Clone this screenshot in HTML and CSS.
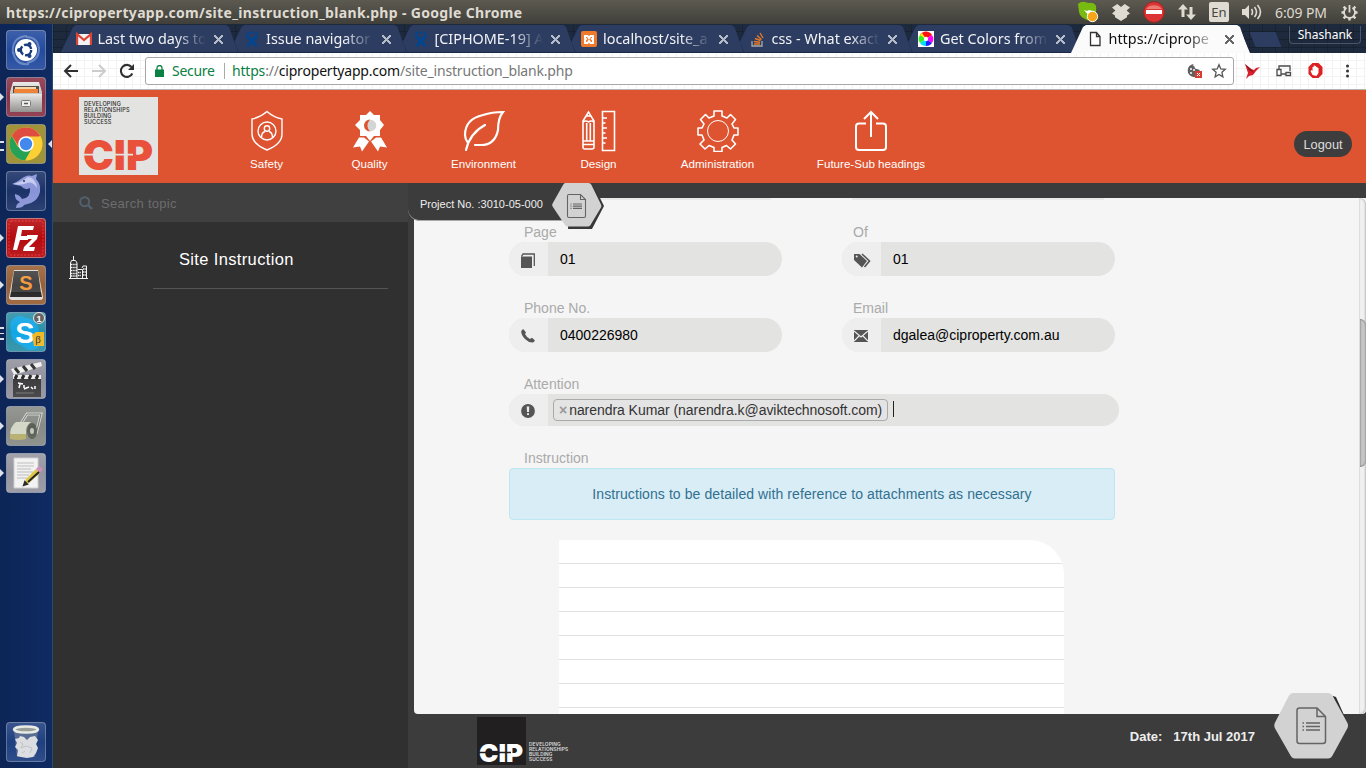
FILE: index.html
```html
<!DOCTYPE html>
<html lang="en">
<head>
<meta charset="utf-8">
<title>Site Instruction</title>
<link rel="stylesheet" href="styles.css">
</head>
<body>
<svg class="defs" width="0" height="0" aria-hidden="true">
  <defs>
    <linearGradient id="steel" x1="0" y1="0" x2="0" y2="1"><stop offset="0" stop-color="#e8e8e6"/><stop offset="1" stop-color="#8d8c8b"/></linearGradient>
    <symbol id="jira" viewBox="0 0 14 16"><g fill="#04458c"><circle cx="7" cy="1.600" r="1.600"/><circle cx="2.600" cy="2.600" r="1.500"/><circle cx="11.400" cy="2.600" r="1.500"/><path d="M0 5l3-.5 4 2.300 4-2.300 3 .5-4.500 4.700L13 15l-3 1-3-4-3 4-3-1 3.500-5.300z"/></g></symbol>
    <symbol id="hex" viewBox="0 0 52 46"><path d="M18 3h24l10 20-12 23H16z" fill="#383838"/><path d="M13.500 0h23Q38.500 0 39.500 2L49 21.500q.8 1.500 0 3L38.500 42q-1 1.500-3 1.500H16q-2 0-3-1.500L.6 23.500q-.8-1.500 0-3L11 2q.8-2 2.500-2z" fill="#d2d2d2"/><path d="M17 11.500h11.500l5 5V33q0 1.500-1.500 1.500H17q-1.500 0-1.500-1.500V13q0-1.500 1.500-1.500zm11.500 0v5h5" fill="none" stroke="#646464" stroke-width="1.100"/><path d="M21 21h9M21 23.200h9M21 25.400h9M18.500 21h1M18.500 23.200h1M18.500 25.400h1" stroke="#646464" stroke-width="1.200"/></symbol>
    <symbol id="hex-large" viewBox="0 0 75 66"><path d="M59 3l3 1 12 27-15 30z" fill="#2c2c2c"/><path d="M19 0h35q3 0 4.500 2.500L73.500 30q1 2.500 0 5L58.500 62.500Q57 65.500 54 65.500H21q-3 0-4.500-3L.8 35q-1-2.500 0-5L15 2.500Q16.500 0 19 0z" fill="#d2d2d2"/><path d="M25.500 15H43l8.500 8.500V48q0 2.500-2.500 2.500H25.500Q23 50.500 23 48V17.500q0-2.500 2.500-2.500zM43 15v8.500h8.500" fill="none" stroke="#646464" stroke-width="1.500"/><path d="M32 30h14M32 33.500h14M32 37h14M28.500 30h1.500M28.500 33.500h1.500M28.500 37h1.500" stroke="#646464" stroke-width="1.500"/></symbol>
  </defs>
</svg>

<div class="titlebar">
  <span class="window-title">https://cipropertyapp.com/site_instruction_blank.php - Google Chrome</span>
  <div class="tray">
    <svg width="22" height="22" viewBox="0 0 22 22"><path d="M1 3q4-4 10-1 6-1 8 3 1 8-3 12-4 4-8 1-5-2-6-7z" fill="#77bb10"/><path d="M7 9l3 1 2-1 4 1-3 6z" fill="#fff"/><circle cx="15.500" cy="15.500" r="5.200" fill="#f9a51a" stroke="#fff"/></svg>
    <svg width="18" height="17" viewBox="0 0 18 17"><path d="M5.300 0L9 3l3.700-3L18 3.600 14.600 6.500 18 9.400l-3 2v1.800L9 17l-6-3.800v-1.800l-3-2 3.400-2.900L0 3.600z" fill="#dfdbd2"/></svg>
    <svg width="22" height="22" viewBox="0 0 22 22"><circle cx="11" cy="11" r="10.300" fill="#dc3434" stroke="#a32424"/><path d="M3 8a9 7 0 0116 0z" fill="#ec7b72"/><path d="M3 9h16v4H3z" fill="#fff"/></svg>
    <svg width="18" height="18" viewBox="0 0 18 18"><path d="M5 1l5 5.500H6.500V14h-3V6.500H0zM13 17l-5-5.500h3.500V4h3v7.500H18z" fill="#dfdbd2"/></svg>
    <span class="keyboard">En</span>
    <svg width="20" height="16" viewBox="0 0 20 16"><path d="M0 5h3l4-4v14l-4-4H0z" fill="#dfdbd2"/><path d="M9.500 5q2 3 0 6M12.500 3q4 5 0 10M15.500 1q6 7 0 14" fill="none" stroke="#dfdbd2" stroke-width="1.600"/></svg>
    <span class="clock">6:09 PM</span>
    <svg width="17" height="17" viewBox="0 0 17 17"><g fill="none" stroke="#dfdbd2" stroke-width="1.800"><path d="M5.500 3.800a5.500 5.500 0 106 0M8.500 1v7.500"/><path stroke-width="2.400" d="M.5 8.500h2.500M14 8.500h2.500M2.600 2.600l1.700 1.700M12.700 4.300l1.700-1.700M2.600 14.400l1.700-1.700M12.700 12.700l1.700 1.700M8.500 14v2.500"/></g></svg>
  </div>
</div>

<div class="desktop">
  <nav class="launcher">
    <div class="app"><svg viewBox="0 0 40 40"><rect class="tile" x=".5" y=".5" width="39" height="39" rx="3" fill="#244b9f"/><path d="M7 24Q5 7 21 6M20 7q13 0 13 14M33 17q1 13-12 16M23 34Q10 36 7 22" fill="none" stroke="#7d9bd0" stroke-width="2" opacity=".7"/><circle cx="20" cy="20" r="11" fill="#fff"/><circle cx="20" cy="20" r="5.200" fill="none" stroke="#16387e" stroke-width="2.400" stroke-dasharray="9 1.900"/><g fill="#16387e"><circle cx="13" cy="20" r="2"/><circle cx="23.500" cy="14" r="2"/><circle cx="23.500" cy="26" r="2"/></g></svg></div>
    <div class="app running"><svg viewBox="0 0 40 40"><rect class="tile" x=".5" y=".5" width="39" height="39" rx="3" fill="#8b3347"/><path d="M7 5h26l3 10v20H4V15z" fill="url(#steel)"/><path d="M7 9h26v7H7z" fill="#4c4540"/><path d="M8 12h24v4H8z" fill="#ee7e2f"/><path d="M9 10h21v2H9z" fill="#f3d4a5"/><path d="M4 17h32v18H4z" fill="url(#steel)"/><rect x="15.500" y="23.500" width="9" height="6" rx="1" fill="#eee" stroke="#777"/><path d="M18 26.500h4" stroke="#555" stroke-width="1.500"/></svg></div>
    <div class="app windows focused"><svg viewBox="0 0 40 40"><rect class="tile" x=".5" y=".5" width="39" height="39" rx="3" fill="#a1933a"/><circle cx="20" cy="20" r="16.500" fill="#fccf35"/><path d="M20 20L5.700 11.750A16.500 16.500 0 0134.300 12z" fill="#df4d40"/><path d="M5.700 11.750A16.500 16.500 0 0019 36.500L26 24 12 23z" fill="#26a257"/><path d="M20 12.500h14.500L27 24z" fill="#fccf35"/><path d="M6 12l7 11 7-10z" fill="#df4d40"/><circle cx="20" cy="20" r="7.800" fill="#fff"/><circle cx="20" cy="20" r="6.200" fill="#4288ed"/></svg></div>
    <div class="app"><svg viewBox="0 0 40 40"><rect class="tile" x=".5" y=".5" width="39" height="39" rx="3" fill="#1b3268"/><path d="M6 13q5-2 9-5 6-5 11-3l5-2-1 5q5 5 4 13-2 8-9 11l-7 2q-1 3-8 3 0-4 4-6-6-3-5-8 5 1 7 5 9-1 8-11-5 3-9-2-5-1-9-2z" fill="#8994d8"/><path d="M7 13q9-2 15-7 8 1 9 11-5-7-10-5-6 3-14 1z" fill="#c3c9ef"/><circle cx="18" cy="10" r="1" fill="#17224d"/></svg></div>
    <div class="app running"><svg viewBox="0 0 40 40"><rect x=".5" y=".5" width="39" height="39" rx="3" fill="#b40b0f" stroke="#b96b70"/><rect x="3" y="3" width="34" height="34" rx="2" fill="none" stroke="#ee3030" stroke-dasharray="2 1.500"/><path d="M12 8h16l-1 4H16l-1 6h8l-1 4h-8l-3 10H7z" fill="#fff"/><path d="M21 17h11l-1 4-8 8h6l-1 4H17l1-4 8-8h-5z" fill="#fff"/></svg></div>
    <div class="app running"><svg viewBox="0 0 40 40"><rect class="tile" x=".5" y=".5" width="39" height="39" rx="3" fill="#996035"/><path d="M8 5h24l5 27q0 3-3 3H6q-3 0-3-3z" fill="#dedddb"/><path d="M8 6h24l3 22H5z" fill="#434344"/><path d="M5 27h30l1 5H4z" fill="#242425"/><text x="20" y="25" text-anchor="middle" class="mark-s">S</text></svg></div>
    <div class="app windows many"><svg viewBox="0 0 40 40"><rect class="tile" x=".5" y=".5" width="39" height="39" rx="3" fill="#2a90a8"/><circle cx="14" cy="14" r="10" fill="#12a6e6"/><circle cx="25" cy="27" r="11" fill="#12a6e6"/><circle cx="19" cy="20" r="14" fill="#12a6e6"/><text x="19" y="31" text-anchor="middle" class="mark-skype">S</text><path d="M26 23l4-3h8v14H28z" fill="#efb823"/><text x="32" y="31" text-anchor="middle" class="mark-beta">β</text><circle cx="33" cy="6" r="5.500" fill="#555" stroke="#e8e8e8"/><text x="33" y="9.500" text-anchor="middle" class="mark-count">1</text></svg></div>
    <div class="app running"><svg viewBox="0 0 40 40"><rect class="tile" x=".5" y=".5" width="39" height="39" rx="3" fill="#92929e"/><path d="M7 18h28v20H7z" fill="#3d3d3f"/><path d="M5 10L35 3l1 4L8 16z" fill="#eee"/><path d="M7 16h28v4H7z" fill="#eee"/><path d="M9 9l4 5M17 7l4 5M25 5l4 5M11 16l-2 4M18 16l-2 4M25 16l-2 4M32 16l-2 4" stroke="#282828" stroke-width="3"/><path d="M12 24l5 1m-3 0l-1 4m5-3v3m0 1l5-2m2 0l2 2m2-3v3" stroke="#fff" stroke-width="1.500"/><path d="M10 34h18" stroke="#777"/></svg></div>
    <div class="app running"><svg viewBox="0 0 40 40"><rect class="tile" x=".5" y=".5" width="39" height="39" rx="3" fill="#878a85"/><path d="M14 19l7-11h14l-5 20" fill="none" stroke="#d0d1ce" stroke-width="3"/><path d="M14 19l7-11h14l-5 20" fill="none" stroke="#717670"/><path d="M9 17h18v15H5z" fill="#898e7c"/><path d="M10 16h15q-6 4-5 12l-16 2q0-10 6-14z" fill="#d3d7c7"/><ellipse cx="26" cy="25" rx="5" ry="8" fill="#5b6057"/><ellipse cx="26" cy="25" rx="2" ry="3" fill="#c3c6bd"/><path d="M4 28h16v5q-8 2-16 0z" fill="#b6ae6d"/></svg></div>
    <div class="app running"><svg viewBox="0 0 40 40"><rect class="tile" x=".5" y=".5" width="39" height="39" rx="3" fill="#9696a0"/><path d="M8 5h24v30H8z" fill="#f2f2f2" stroke="#ccc"/><path d="M11 10h17M11 13h17M11 16h14M11 19h16M11 22h12M11 25h10" stroke="#bbb"/><path d="M18 32l2-6 10-10 4 4-11 10z" fill="#ddc746"/><path d="M30 16l3-3 4 3-3 4z" fill="#cf8dba"/><path d="M18 32l1-3 2 2zM22 29l11-10" fill="#222" stroke="#222" stroke-width="2"/></svg></div>
    <div class="app trash"><svg viewBox="0 0 40 40"><rect class="tile" x=".5" y=".5" width="39" height="39" rx="3" fill="#1f3f80"/><path d="M8 9h24l-3 26H11z" fill="#52678f"/><path d="M9 17l4-1 1-2 4 1 3 3 3-3 5-1 3 4-2 4 2 4-2 5-3 4-6 1-6-1-4-1 1-6-3-3 2-4z" fill="#dcdde0"/><path d="M14 20l3 2-2 4 5-2 6 2-2 5M16 31l3-2" fill="none" stroke="#bfc1c7"/><ellipse cx="20" cy="7.500" rx="12" ry="3" fill="#909791" stroke="#e9e9e3" stroke-width="2.500"/></svg></div>
  </nav>

  <div class="browser">
    <div class="tabs">
      <div class="tab t1"><svg class="fav" viewBox="0 0 16 16"><path d="M1 3h14v11H1z" fill="#f3f3f3"/><path d="M1 14V3l7 6 7-6v11" fill="none" stroke="#dc4437" stroke-width="2.300"/></svg><span class="tab-title">Last two days to</span><i class="close"></i></div>
      <div class="tab t2"><svg class="fav"><use href="#jira"/></svg><span class="tab-title">Issue navigator</span><i class="close"></i></div>
      <div class="tab t3"><svg class="fav"><use href="#jira"/></svg><span class="tab-title">[CIPHOME-19] A</span><i class="close"></i></div>
      <div class="tab t4"><svg class="fav" viewBox="0 0 16 16"><rect width="16" height="16" rx="2" fill="#f0792b"/><path d="M4 5h2.500L8 7l1.500-2H12v2.500l-1 .5 1 1V12H9.500L8 10l-1.500 2H4V9l1-1-1-1z" fill="none" stroke="#fff" stroke-width="2"/></svg><span class="tab-title">localhost/site_a</span><i class="close"></i></div>
      <div class="tab t5"><svg class="fav" viewBox="0 0 16 16"><path d="M2 10v5h10v-5" fill="none" stroke="#aaa" stroke-width="1.300"/><path d="M4 13h6M4 10.500l6 .7M5 7.500l5.600 2M7 4.500l4.500 4M10 2l3 5" stroke="#e67b27" stroke-width="1.400"/></svg><span class="tab-title">css - What exact</span><i class="close"></i></div>
      <div class="tab t6"><svg class="fav" viewBox="0 0 16 16"><path d="M0 0h16v16H0z" fill="#fff"/><path d="M8 8L2 4a7 7 0 0112 0z" fill="#f11"/><path d="M8 8l6-4a7 7 0 010 8z" fill="#f0f"/><path d="M8 8l6 4a7 7 0 01-6 3z" fill="#22f"/><path d="M8 8v7a7 7 0 01-6-3z" fill="#0df"/><path d="M8 8l-6 4a7 7 0 010-8z" fill="#3e2"/><path d="M8 8L2 4l2-2z" fill="#ff0"/><circle cx="8" cy="8" r="2.200" fill="#fff"/></svg><span class="tab-title">Get Colors from</span><i class="close"></i></div>
      <div class="tab t7 active"><svg class="fav" viewBox="0 0 16 16"><path d="M3.500 1.500h6l3.500 4v9H3.500zM9.500 1.500v4H13" fill="#fff" stroke="#333" stroke-width="1.300"/></svg><span class="tab-title">https://ciprope</span><i class="close"></i></div>
      <i class="new-tab"></i>
      <span class="profile">Shashank</span>
    </div>

    <div class="toolbar">
      <svg class="navs" width="76" height="18" viewBox="0 0 76 18"><path d="M16 9H3M9 3L3 9l6 6" fill="none" stroke="#303030" stroke-width="2"/><path d="M30 9h13M37 3l6 6-6 6" fill="none" stroke="#ccc" stroke-width="2"/><path d="M69.500 5a6 6 0 10.800 6.500" fill="none" stroke="#303030" stroke-width="2.100"/><path d="M72 2v6h-6z" fill="#303030"/></svg>
      <div class="omnibox">
        <svg width="9" height="12" viewBox="0 0 9 12"><path d="M0 4.500h9V12H0z" fill="#0b8043"/><path d="M2 5V3a2.500 2.500 0 015 0v2" fill="none" stroke="#0b8043" stroke-width="1.300"/></svg>
        <span class="secure">Secure</span>
        <span class="url"><b>https</b>://<em>cipropertyapp.com</em>/site_instruction_blank.php</span>
        <svg class="end" width="40" height="16" viewBox="0 0 40 16"><path d="M6.500 1q-1 2 1 2.500 0 2.500 2 2.500 3 0 4 3a6.500 6.500 0 11-7-8z" fill="#606060"/><g fill="#fff"><circle cx="4" cy="6" r="1"/><circle cx="7" cy="7" r="1"/><circle cx="4" cy="10" r="1"/></g><path d="M8 8h7v7H8z" fill="#d93d32"/><path d="M10 10l3 3m0-3l-3 3" stroke="#fff"/><path d="M32 1.700l1.800 4.200 4.500.4-3.400 3 1 4.500-3.900-2.400-3.900 2.400 1-4.500-3.400-3 4.500-.4z" fill="none" stroke="#555" stroke-width="1.300"/></svg>
      </div>
      <svg class="extensions" width="112" height="18" viewBox="0 0 112 18"><path d="M0 2l6 5 3 1 2-2 4-1-4 4-3 4-4 1-3 3 2-6z" fill="#d91f2b"/><path d="M0 2l6 5 3 4-5-3z" fill="#8d1620"/><g fill="none" stroke="#4c4c4c" stroke-width="1.300"><path d="M34 7V4h11v5M36 12h5"/><path d="M32 7.500h4v6h-4zM41 10.500h4.500v3H41z"/></g><path d="M67.500 1h6l4 4v7l-4 4h-6l-4-4V5z" fill="#df2020"/><path d="M67.500 13l-2-4 1-1 1 1V5h1.200V3.500h1.200V4h1.200v1h1.400v1h1v5l-2 3z" fill="#fff"/><g fill="#333"><circle cx="102.500" cy="4" r="1.500"/><circle cx="102.500" cy="9" r="1.500"/><circle cx="102.500" cy="14" r="1.500"/></g></svg>
    </div>

    <header class="site-header">
      <div class="logo">
        <div class="tagline">DEVELOPING<br>RELATIONSHIPS<br>BUILDING<br>SUCCESS</div>
        <svg width="72" height="32" viewBox="0 0 72 32"><text x="0" y="30.500" textLength="70" lengthAdjust="spacingAndGlyphs" class="cip">CIP</text><path d="M-1 15.700h51" stroke="#e3e3e1" stroke-width="1.800"/></svg>
      </div>
      <nav class="site-nav">
        <a><svg width="34" height="42" viewBox="0 0 34 42"><g fill="none" stroke="#fff" stroke-width="1.400"><path d="M17 1.500Q23 7 32 9v15q0 10-15 16Q2 34 2 24V9q9-2 15-7.500z"/><circle cx="17" cy="21" r="9"/><circle cx="17" cy="18.500" r="2.700"/><path d="M11.500 27.500q0-5 3.500-6M22.500 27.500q0-5-3.500-6"/></g></svg>Safety</a>
        <a><svg width="36" height="42" viewBox="0 0 36 42"><path d="M18 1l4 4h6v5l4 5-4 5v6h-6l-4 5-4-5H8v-6l-5-5 5-5V5h6z" fill="#fff"/><path d="M7 27.500h5l5 4-7 10-2-5-7 1zM29 27.500h-5l-5 4 7 10 2-5 7 1z" fill="#fff"/><circle cx="18.500" cy="15.500" r="5.800" fill="#d4d4d4"/><path d="M18 9.500a6 6 0 000 12q-5-6 0-12z" fill="#de5330"/></svg>Quality</a>
        <a><svg width="42" height="42" viewBox="0 0 42 42"><g fill="none" stroke="#fff" stroke-width="2.200" stroke-linecap="round"><path d="M12 35h6q14 0 17-15 0-12 5-18-11 0-20 3Q2 9 2 25q0 4 3 8"/><path d="M22 15Q7 23 3 40"/></g></svg>Environment</a>
        <a><svg width="36" height="42" viewBox="0 0 36 42"><g fill="none" stroke="#fff" stroke-width="1.600"><path d="M2 11L7.500 2 13 11v26q0 2-2 2H4q-2 0-2-2zM2 31h11M2 34.500h11M5.700 13v18M9.300 13v18M2 12q3-2 5.500 0 2.500-2 5.500 0M5 6h5"/><path d="M21.500 1.500h12v39h-12zM21 8h5M21 13h3.500M21 18h5M21 23h3.500M21 28h5M21 33h3.500"/></g></svg>Design</a>
        <a><svg width="42" height="42" viewBox="0 0 42 42"><g fill="none" stroke="#fff" stroke-width="1.600" stroke-linejoin="round"><path d="M17 1h8v5l5 2 3.500-3.500 5 5L35 14l2 4h4v7h-4l-2 5 3.500 4-5 5-4-3.500-4.500 2v4h-8v-4l-5-2-4 3.500-5-5L7 30l-2-5H1v-7h4l2-4-3.500-4.500 5-5L12 8l5-2z"/><circle cx="21" cy="21" r="10.500" stroke-width="1"/></g></svg>Administration</a>
        <a><svg width="34" height="42" viewBox="0 0 34 42"><g fill="none" stroke="#fff" stroke-width="2"><path d="M12 13.500H5q-3 0-3 3V37q0 3 3 3h24q3 0 3-3V16.500q0-3-3-3h-7M17 27V2M10 9l7-7 7 7"/></g></svg>Future-Sub headings</a>
      </nav>
      <button class="logout">Logout</button>
    </header>

    <div class="workspace">
      <aside class="sidebar">
        <div class="search"><svg width="14" height="14" viewBox="0 0 14 14"><circle cx="5.700" cy="5.700" r="4.500" fill="none" stroke="#52616f" stroke-width="2"/><path d="M9 9l4 4" stroke="#52616f" stroke-width="2.400"/></svg>Search topic</div>
        <div class="topic">
          <svg width="19" height="24" viewBox="0 0 19 24"><g fill="none" stroke="#f4f4f4"><path d="M4.500 0v4M1.500 22.500V7l1-2.500h4L8 7v15.500M8.500 13.500h5v9M13 12l1-2h3.500v12.500M0 22.500h19"/><path d="M2 8.500h6M2 11.500h6M2 14.500h6M2 17.500h6M2 20h6M9 16.500h3M9 19.500h3M14 13h3M14 16h3M14 19h3" stroke-width="1.400" stroke-dasharray="1.500 .7"/></g></svg>
          <span class="topic-title">Site Instruction</span>
        </div>
      </aside>

      <main class="content">
        <div class="project"><span>Project No. :3010-05-000</span></div>
        <svg class="project-hex"><use href="#hex"/></svg>
        <section class="panel">
          <form class="form">
            <div class="row previous"><i></i><i></i></div>
            <div class="row">
              <div class="field"><label>Page</label><div class="input"><span class="addon"><svg width="14" height="15" viewBox="0 0 14 15"><path d="M0 3.500h11V15H0z" fill="#555"/><path d="M.5 3.500L2 1h11.300v12" fill="none" stroke="#555" stroke-width="1.300"/></svg></span><span class="value">01</span></div></div>
              <div class="field"><label>Of</label><div class="input"><span class="addon"><svg width="18" height="15" viewBox="0 0 18 15"><path d="M0 1h5.500l7.500 7-5 6.500L0 7z" fill="#555"/><circle cx="2.700" cy="3.500" r="1" fill="#eee"/><path d="M8 1l7.500 7-5 6" fill="none" stroke="#555" stroke-width="1.600"/></svg></span><span class="value">01</span></div></div>
            </div>
            <div class="row">
              <div class="field"><label>Phone No.</label><div class="input"><span class="addon"><svg width="14" height="14" viewBox="0 0 14 14"><path d="M2.500.3q-1.500 0-2.300 2Q0 6 4 10t8 3.500q1.800-.8 1.800-2.300L11 8.800 9 10Q6 9 4 5l1-1.500z" fill="#555"/></svg></span><span class="value">0400226980</span></div></div>
              <div class="field"><label>Email</label><div class="input"><span class="addon"><svg width="14" height="12" viewBox="0 0 14 12"><path d="M0 0h14v12H0z" fill="#555"/><path d="M0 1l7 6 7-6M0 11l5-5M14 11L9 6" fill="none" stroke="#eee" stroke-width="1.200"/></svg></span><span class="value">dgalea@ciproperty.com.au</span></div></div>
            </div>
            <div class="field wide"><label>Attention</label><div class="input"><span class="addon"><svg width="14" height="14" viewBox="0 0 14 14"><circle cx="7" cy="7" r="6.900" fill="#555"/><path d="M5.700 2.500h2.600L8 8H6zM6 9.200h2V11H6z" fill="#eee"/></svg></span><span class="tags"><span class="tag"><i>×</i>narendra Kumar (narendra.k@aviktechnosoft.com)</span><i class="caret"></i></span></div></div>
            <div class="field instruction"><label>Instruction</label><div class="alert">Instructions to be detailed with reference to attachments as necessary</div></div>
            <div class="notes"></div>
          </form>
          <div class="scrollbar"><i></i></div>
        </section>
        <footer class="footer">
          <div class="footer-logo"><svg width="45" height="22" viewBox="0 0 45 22"><text x="0" y="20" textLength="44" lengthAdjust="spacingAndGlyphs" class="cip-small">CIP</text><path d="M-1 10.500h33" stroke="#211f20" stroke-width="1.300"/></svg></div>
          <div class="footer-tag">DEVELOPING<br>RELATIONSHIPS<br>BUILDING<br>SUCCESS</div>
          <div class="date"><span>Date:</span><span>17th Jul 2017</span></div>
        </footer>
        <svg class="footer-hex"><use href="#hex-large"/></svg>
      </main>
    </div>
  </div>
</div>
</body>
</html>
```
FILE: styles.css
```css
* { box-sizing: border-box; }
body { margin: 0; width: 1366px; height: 768px; overflow: hidden; display: flex; flex-direction: column; font-family: "Liberation Sans", Arial, sans-serif; }
svg { display: block; flex: none; }
.defs { position: absolute; }

/* system bar */
.titlebar { height: 24px; flex: none; display: flex; align-items: center; justify-content: space-between; padding: 0 8px 0 6px; background: linear-gradient(#5c5a50, #403f3a); color: #dfdbd2; font-family: "Noto Sans", sans-serif; }
.window-title { font-size: 14px; font-weight: 700; letter-spacing: .33px; white-space: nowrap; }
.tray { display: flex; align-items: center; gap: 13px; font-size: 14px; }
.keyboard { width: 20px; height: 20px; border-radius: 2px; background: #dfdbd2; color: #474640; font-size: 13px; line-height: 20px; text-align: center; }
.clock { white-space: nowrap; width: 53px; letter-spacing: -.1px; }

.desktop { flex: 1; min-height: 0; display: flex; }

/* launcher */
.launcher { width: 53px; flex: none; padding: 6px 0 6px 6px; display: flex; flex-direction: column; gap: 7px; background: linear-gradient(90deg, #0d2557, #0f2b62); border-right: 1px solid #2f4a69; }
.app { position: relative; width: 40px; height: 40px; }
.app svg { width: 40px; height: 40px; }
.tile { stroke: #fff; stroke-opacity: .3; }
.app::before { content: ""; position: absolute; inset: 0; border-radius: 3px; background: linear-gradient(rgba(255,255,255,.12), rgba(255,255,255,0) 50%, rgba(255,255,255,.08)); }
.running::after { content: ""; position: absolute; left: -6px; top: 16px; border: 4px solid transparent; border-left-color: #dce1e8; border-right: 0; }
.windows::after { content: ""; position: absolute; left: -6px; top: 17px; width: 4px; height: 6px; border: solid #dce1e8; border-width: 2px 0; }
.many::after { background: linear-gradient(#dce1e8 0 0) center / 100% 1px no-repeat; top: 15px; height: 9px; }
.focused::before { left: 42px; right: auto; top: 16px; bottom: auto; border: 4px solid transparent; border-right-color: #dce1e8; border-left: 0; background: none; border-radius: 0; }
.trash { margin-top: auto; }
.mark-s { font: 700 20px "Liberation Sans", sans-serif; fill: #f49a3d; }
.mark-skype { font: 700 29px "Liberation Sans", sans-serif; fill: #fff; }
.mark-beta { font: 11px "Liberation Serif", serif; fill: #333; }
.mark-count { font: 700 9px "Liberation Sans", sans-serif; fill: #fff; }

/* browser frame */
.browser { flex: 1; min-width: 0; display: flex; flex-direction: column; }
.tabs { height: 29px; flex: none; display: flex; align-items: flex-start; padding: 1px 2px 0 7px; background: repeating-linear-gradient(90deg, rgba(0,0,0,.15) 0 1px, transparent 1px 13px), repeating-linear-gradient(#1d293d 0 7px, #172130 7px 8px); font-family: "Noto Sans", sans-serif; }
.tab { position: relative; width: 179px; height: 28px; flex: none; margin-right: -10.500px; display: flex; align-items: center; padding-left: 15.500px; color: #f2f3f6; font-size: 14.400px; isolation: isolate; }
.tab::before, .tab::after { content: ""; position: absolute; z-index: -1; inset: 0; background: #1b2847; clip-path: polygon(0 100%, 12px 2px, 15px 0, 165px 0, 168px 2px, 100% 100%); }
.tab::after { inset: 0 1px 1px; background: #2d3c61; }
.t1 { z-index: 6; } .t2 { z-index: 5; } .t3 { z-index: 4; } .t4 { z-index: 3; } .t5 { z-index: 2; } .t6 { z-index: 1; }
.active { z-index: 7; color: #111; }
.active::before, .active::after { background: #fbfbfb; }
.active::after { bottom: 0; }
.fav { width: 16px; height: 16px; margin-right: 6px; }
.tab-title { width: 108px; line-height: 24px; overflow: hidden; white-space: nowrap; -webkit-mask: linear-gradient(90deg, #000 72%, transparent); mask: linear-gradient(90deg, #000 72%, transparent); }
.close { width: 9px; height: 9px; margin-left: 8px; background: linear-gradient(45deg, transparent 43%, #b5bac7 43% 57%, transparent 57%), linear-gradient(-45deg, transparent 43%, #b5bac7 43% 57%, transparent 57%); }
.active .close { background: linear-gradient(45deg, transparent 43%, #666 43% 57%, transparent 57%), linear-gradient(-45deg, transparent 43%, #666 43% 57%, transparent 57%); }
.new-tab { width: 32px; height: 15px; margin: 7px 0 0 10px; background: #2d3c61; clip-path: polygon(0 0, 26px 0, 100% 100%, 6px 100%); }
.profile { margin: 1px 3px 0 auto; width: 72px; height: 18px; border: 1px solid #4b5565; border-top: 0; border-radius: 0 0 4px 4px; color: #fff; font-size: 12px; line-height: 18px; text-align: center; }
.toolbar { height: 37px; flex: none; display: flex; align-items: center; padding-left: 9px; background: repeating-linear-gradient(90deg, transparent 0 7px, #f3f3f3 7px 8px), repeating-linear-gradient(#fff 0 7px, #f3f3f3 7px 8px); border-bottom: 1px solid #b5b5b5; }
.navs { margin-right: 7px; }
.omnibox { width: 1089px; height: 28px; display: flex; align-items: center; padding: 0 6px 0 9px; background: #fff; border: 1px solid #a8a8a8; border-radius: 3px; font: 14px "Noto Sans", sans-serif; }
.secure { margin-left: 8px; padding-right: 9px; border-right: 1px solid #aaa; color: #0b8043; line-height: 16px; width: 53px; letter-spacing: -.3px; }
.url { margin: -2px 0 0 7px; color: #777; letter-spacing: -.19px; }
.url b { font-weight: 400; color: #0b8043; }
.url em { font-style: normal; color: #111; }
.end { margin-left: auto; }
.extensions { margin-left: 11px; }

/* site header */
.site-header { height: 93px; flex: none; display: flex; align-items: flex-start; background: #de5330; color: #fff; }
.logo { width: 79px; height: 78px; margin: 7px 0 0 26px; padding: 5px 0 0 4px; background: #e3e3e1; color: #e9513a; }
.logo svg { overflow: visible; }
.tagline { height: 37px; padding-left: 1px; color: #252525; font: 500 5.500px/5.900px Inter, sans-serif; letter-spacing: .2px; }
.cip { font: 900 41px Inter, sans-serif; fill: #e9513a; }
.site-nav { display: grid; grid-template-columns: 101px 105px 123px 107px 131px 176px; margin-left: 58px; padding-top: 20px; }
.site-nav a { display: flex; flex-direction: column; align-items: center; gap: 5px; font-size: 11.600px; line-height: 14px; white-space: nowrap; }
.logout { width: 58px; height: 26px; margin: 41px 14px 0 auto; padding: 0; border: 0; border-radius: 14px; background: #3d3d3d; color: #ddd; font: 12.800px "Liberation Sans", sans-serif; }

/* workspace */
.workspace { flex: 1; min-height: 0; display: flex; }
.sidebar { width: 355px; flex: none; background: #303030; }
.search { height: 39px; display: flex; align-items: center; gap: 8px; padding: 1px 0 0 26px; background: #404040; color: #6d6d6d; font-size: 13px; letter-spacing: .3px; }
.topic { height: 67px; display: flex; padding-left: 16px; }
.topic svg { margin: 34px 65px 0 0; }
.topic-title { width: 235px; padding: 27px 0 0 26px; border-bottom: 1px solid #555; color: #fff; font-size: 16.500px; line-height: 20px; letter-spacing: .35px; }
.content { position: relative; flex: 1; min-width: 0; display: flex; flex-direction: column; padding: 15px 0 0 6px; background: #3c3c3c; }
.project { position: absolute; z-index: 2; left: 0; top: 0; width: 160px; height: 38px; padding: 14px 0 0 12px; background: #3c3c3c; border-radius: 0 0 0 12px; border-bottom: 1px solid #aaa; color: #eee; font-size: 11px; line-height: 14px; white-space: nowrap; }
.project-hex { position: absolute; z-index: 3; left: 144px; top: 0; width: 52px; height: 46px; }
.panel { height: 516px; flex: none; display: flex; justify-content: space-between; background: #f5f5f5; border-radius: 0 0 4px 4px; overflow: hidden; }
.form { width: 610px; margin-left: 95px; }
.row { display: flex; gap: 60px; }
.previous { height: 2px; margin-bottom: 22px; }
.previous i { width: 273px; height: 2px; background: linear-gradient(90deg, transparent 10px, #e9e9e8 10px 262px, transparent 262px); }
.field { width: 273px; height: 76px; }
label { display: block; height: 20px; padding-left: 15px; color: #aaa; font-size: 14px; line-height: 20px; }
.row .field:nth-child(2) label { padding-left: 11px; }
.input { height: 34px; display: flex; align-items: center; border-radius: 17px; background: #e3e3e1; overflow: hidden; font-size: 14px; color: #000; }
.addon { width: 39px; height: 100%; flex: none; display: flex; align-items: center; padding: 2px 0 0 12px; background: #eee; }
.value { padding-left: 12px; }
.wide { width: 610px; height: 74px; }
.wide .input { height: 32px; }
.tags { display: flex; align-items: center; gap: 5px; padding-left: 5px; }
.tag { height: 22px; padding: 0 5px; border: 1px solid #aaa; border-radius: 4px; background: #e4e4e4; color: #333; line-height: 20px; white-space: nowrap; letter-spacing: -.05px; }
.tag i { color: #999; font-style: normal; font-weight: 700; margin-right: 2px; }
.caret { width: 1px; height: 16px; margin-top: -2px; background: #222; }
.instruction { width: 606px; height: 72px; }
.alert { height: 52px; border: 1px solid #bce8f1; border-radius: 4px; background: #d9edf7; color: #31708f; font-size: 14px; line-height: 50px; text-align: center; letter-spacing: .085px; }
.notes { width: 505px; height: 190px; margin: 20px 0 0 50px; background: repeating-linear-gradient(#fff 0 23px, #e1e1e1 23px 24px); border-top-right-radius: 34px; }
.scrollbar { width: 7px; padding-top: 121px; background: #f1f1f1; border-left: 1px solid #ddd; border-radius: 0 6px 6px 0; box-shadow: inset -1px 0 2px #bbb; }
.scrollbar i { display: block; height: 148px; border-radius: 0 6px 6px 0; background: #c5c5c7; box-shadow: inset 0 0 2px #555; }
.footer { flex: 1; display: flex; align-items: flex-start; padding-left: 63px; color: #fff; }
.footer-logo { width: 49px; height: 48px; margin-top: 3px; padding: 25px 0 0 2px; background: #211f20; }
.footer-logo svg { overflow: visible; }
.cip-small { font: 900 25px Inter, sans-serif; fill: #fff; }
.footer-tag { margin: 28px 0 0 3px; font: 600 4.800px/4.900px Inter, sans-serif; color: #ddd; letter-spacing: .1px; }
.date { display: flex; gap: 11px; margin: 14px 111px 0 auto; font-size: 13px; font-weight: 700; line-height: 17px; color: #eee; }
.footer-hex { position: absolute; z-index: 2; left: 866px; top: 510px; width: 75px; height: 66px; }
```
